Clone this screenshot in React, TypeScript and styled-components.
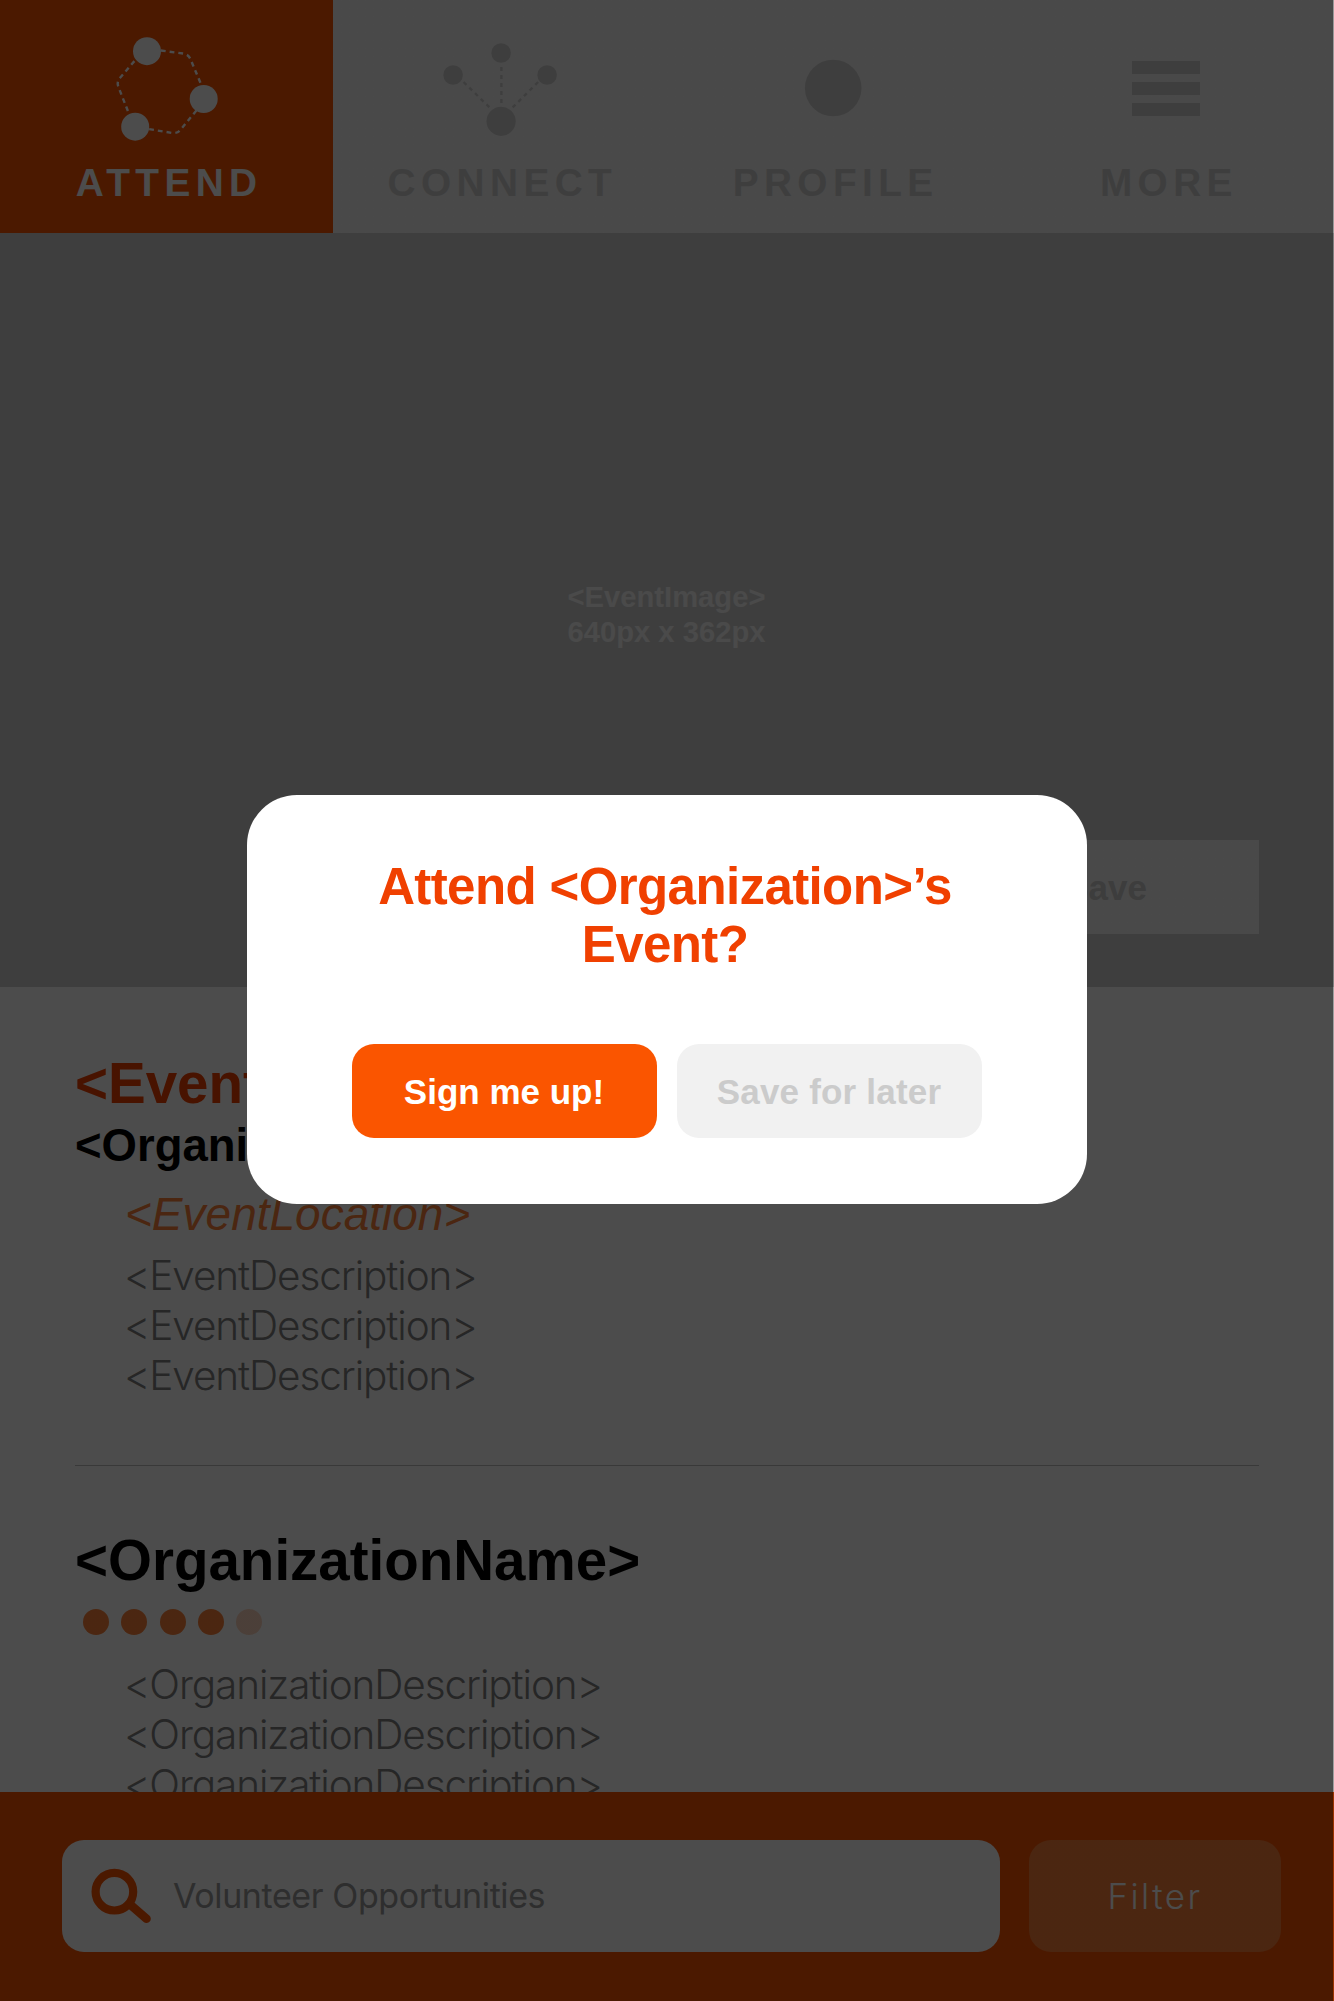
import React from "react";
import styled, { createGlobalStyle } from "styled-components";

const GlobalStyle = createGlobalStyle`
  *, *::before, *::after { box-sizing: border-box; }
  body {
    margin: 0;
    background: #fff;
    font-family: "Liberation Sans", Arial, sans-serif;
  }
  h1, h2, p { margin: 0; }
  button { border: 0; padding: 0; font: inherit; }
`;

const Screen = styled.div`
  position: relative;
  display: flex;
  flex-direction: column;
  width: 1334px;
  height: 2001px;
  overflow: hidden;
  background: #fff;
`;

const Nav = styled.nav`
  flex: none;
  display: grid;
  grid-template-columns: repeat(4, 1fr);
  height: 233px;
  padding-right: 1px;
  background: #f5f5f5;
`;

const Tab = styled.a<{ $active?: boolean }>`
  display: flex;
  flex-direction: column;
  align-items: center;
  color: ${(p) => (p.$active ? "#fff" : "#d0d0d0")};
  background: ${(p) => (p.$active ? "#fa5300" : "transparent")};
`;

const TabIcon = styled.svg`
  flex: none;
  width: 140px;
  height: 161px;
  fill: currentColor;
`;

const TabLabel = styled.span`
  padding-left: 5px;
  font-size: 38.8px;
  line-height: 44px;
  font-weight: 700;
  letter-spacing: 5.4px;
`;

const Hero = styled.section`
  flex: none;
  display: flex;
  flex-direction: column;
  justify-content: space-between;
  height: 754px;
  padding: 347px 75px 53px;
  background: #cfcfcf;
`;

const HeroCaption = styled.p`
  padding-right: 1px;
  color: #f7f7f7;
  font-size: 29.2px;
  line-height: 35px;
  font-weight: 700;
  text-align: center;
`;

const Button = styled.button<{ $tone: "primary" | "muted" | "flat" }>`
  width: 305px;
  height: 94px;
  border-radius: ${(p) => (p.$tone === "flat" ? "0" : "22px")};
  background: ${(p) => (p.$tone === "primary" ? "#fa5500" : p.$tone === "muted" ? "#f1f1f1" : "#f5f5f5")};
  color: ${(p) => (p.$tone === "primary" ? "#fff" : "#cbcbcb")};
  font-size: 35px;
  font-weight: 700;
  letter-spacing: ${(p) => (p.$tone === "muted" ? "0.2px" : "0")};
  padding: 2px 1px 0 0;
`;

const HeroButton = styled(Button)`
  align-self: flex-end;
`;

const Content = styled.main`
  flex: none;
  height: 805px;
  padding: 64px 75px 0;
  overflow: hidden;
`;

const Title = styled.h1<{ $accent?: boolean }>`
  color: ${(p) => (p.$accent ? "#f04000" : "#000")};
  font-size: 56.5px;
  line-height: 66px;
`;

const Subtitle = styled.h2`
  padding-top: 2px;
  font-size: 45.5px;
  line-height: 54px;
`;

const Location = styled.p`
  padding: 14px 0 10px 50px;
  color: #fa8038;
  font-size: 46px;
  line-height: 54px;
  font-style: italic;
`;

const Description = styled.p`
  padding-left: 49px;
  color: #808080;
  font-family: Inter, "Liberation Sans", sans-serif;
  font-size: 40.5px;
  line-height: 50px;
  font-weight: 300;
  letter-spacing: -1.1px;
`;

const EventBlock = styled.section`
  height: 414px;
`;

const OrganizationBlock = styled.section`
  padding-top: 62px;
`;

const Divider = styled.hr`
  height: 1px;
  margin: 0;
  border: 0;
  background: #c0c0c0;
`;

const Rating = styled.div`
  display: flex;
  gap: 12.3px;
  padding: 15px 0 25px 8px;
`;

const Dot = styled.span<{ $filled: boolean }>`
  width: 26px;
  height: 26px;
  border-radius: 50%;
  background: ${(p) => (p.$filled ? "#fa8038" : "#fdd5be")};
`;

const Footer = styled.footer`
  flex: none;
  display: flex;
  gap: 29px;
  height: 209px;
  padding: 48px 53px 0 62px;
  background: #fa5300;
`;

const SearchBox = styled.label`
  display: flex;
  align-items: center;
  width: 938px;
  height: 112px;
  border-radius: 22px;
  background: #fff;
`;

const SearchIcon = styled.svg`
  flex: none;
  width: 111px;
  height: 112px;
  fill: none;
  stroke: #fa5300;
`;

const SearchText = styled.span`
  padding-bottom: 2px;
  color: #999;
  font-family: Inter, "Liberation Sans", sans-serif;
  font-size: 34px;
  font-weight: 400;
  letter-spacing: -0.4px;
`;

const FilterButton = styled.button`
  width: 252px;
  height: 112px;
  border-radius: 22px;
  background: #fa8038;
  color: #fff;
  font-family: Inter, "Liberation Sans", sans-serif;
  font-size: 35px;
  font-weight: 300;
  letter-spacing: 2.4px;
`;

const Scrim = styled.div`
  position: absolute;
  inset: 0;
  background: linear-gradient(to right, rgba(0, 0, 0, 0.7) 1333px, rgba(0, 0, 0, 0.38) 1333px);
`;

const Dialog = styled.div`
  position: absolute;
  top: 795px;
  left: 247px;
  display: flex;
  flex-direction: column;
  justify-content: space-between;
  width: 840px;
  height: 409px;
  padding: 63px 105px 66px;
  border-radius: 50px;
  background: #fff;
`;

const DialogTitle = styled.h2`
  padding-right: 4px;
  color: #f04000;
  font-size: 51px;
  line-height: 58px;
  letter-spacing: -0.6px;
  text-align: center;
  white-space: nowrap;
`;

const DialogActions = styled.div`
  display: flex;
  gap: 20px;
`;

const AttendIcon = () => (
  <TabIcon viewBox="96.6 0 140 161">
    <circle cx="146.6" cy="51.2" r="14" />
    <circle cx="203.3" cy="99" r="14" />
    <circle cx="134.8" cy="126.7" r="14" />
    <g fill="none" stroke="currentColor" strokeWidth="2.4" strokeDasharray="4.8 4">
      <path d="M160.5 50.5 L183 53.6 Q188 54.4 190 59 L201 85" />
      <path d="M196 110.5 L180 130 Q177 133.5 172 133 L148 129" />
      <path d="M127.5 111 L118 87 Q116 82 119.5 78 L134.5 60.5" />
    </g>
  </TabIcon>
);

const ConnectIcon = () => (
  <TabIcon viewBox="429.9 0 140 161">
    <circle cx="501" cy="53" r="9.8" />
    <circle cx="453" cy="75" r="9.8" />
    <circle cx="547" cy="75" r="9.8" />
    <circle cx="501" cy="121.3" r="14.6" />
    <g fill="none" stroke="currentColor" strokeWidth="2.4" strokeDasharray="4 4">
      <path d="M501.3 67 V108" />
      <path d="M463.5 82 L491 109" />
      <path d="M538 82 L511 109" />
    </g>
  </TabIcon>
);

const ProfileIcon = () => (
  <TabIcon viewBox="763.1 0 140 161">
    <circle cx="833.3" cy="88" r="28.3" />
  </TabIcon>
);

const MoreIcon = () => (
  <TabIcon viewBox="1096.4 0 140 161">
    <rect x="1132.4" y="61" width="68" height="13" />
    <rect x="1132.4" y="82" width="68" height="13" />
    <rect x="1132.4" y="103" width="68" height="13" />
  </TabIcon>
);

const TABS = [
  { label: "ATTEND", Icon: AttendIcon, active: true },
  { label: "CONNECT", Icon: ConnectIcon },
  { label: "PROFILE", Icon: ProfileIcon },
  { label: "MORE", Icon: MoreIcon },
];

export default function App() {
  return (
    <>
      <GlobalStyle />
      <Screen>
        <Nav>
          {TABS.map(({ label, Icon, active }) => (
            <Tab key={label} $active={active}>
              <Icon />
              <TabLabel>{label}</TabLabel>
            </Tab>
          ))}
        </Nav>
        <Hero>
          <HeroCaption>
            &lt;EventImage&gt;
            <br />
            640px x 362px
          </HeroCaption>
          <HeroButton $tone="flat">Save</HeroButton>
        </Hero>
        <Content>
          <EventBlock>
            <Title $accent>&lt;EventName&gt;</Title>
            <Subtitle>&lt;OrganizationName&gt;</Subtitle>
            <Location>&lt;EventLocation&gt;</Location>
            {[0, 1, 2].map((i) => (
              <Description key={i}>&lt;EventDescription&gt;</Description>
            ))}
          </EventBlock>
          <Divider />
          <OrganizationBlock>
            <Title>&lt;OrganizationName&gt;</Title>
            <Rating>
              {[1, 2, 3, 4, 5].map((n) => (
                <Dot key={n} $filled={n <= 4} />
              ))}
            </Rating>
            {[0, 1, 2].map((i) => (
              <Description key={i}>&lt;OrganizationDescription&gt;</Description>
            ))}
          </OrganizationBlock>
        </Content>
        <Footer>
          <SearchBox>
            <SearchIcon viewBox="62 1840 111 112">
              <circle cx="114.4" cy="1891.7" r="18.8" strokeWidth="8.2" />
              <path d="M129.5 1904 L146.5 1918.7" strokeWidth="8.6" strokeLinecap="round" />
            </SearchIcon>
            <SearchText>Volunteer Opportunities</SearchText>
          </SearchBox>
          <FilterButton>Filter</FilterButton>
        </Footer>
        <Scrim />
        <Dialog role="dialog">
          <DialogTitle>
            Attend &lt;Organization&gt;’s
            <br />
            Event?
          </DialogTitle>
          <DialogActions>
            <Button $tone="primary">Sign me up!</Button>
            <Button $tone="muted">Save for later</Button>
          </DialogActions>
        </Dialog>
      </Screen>
    </>
  );
}
